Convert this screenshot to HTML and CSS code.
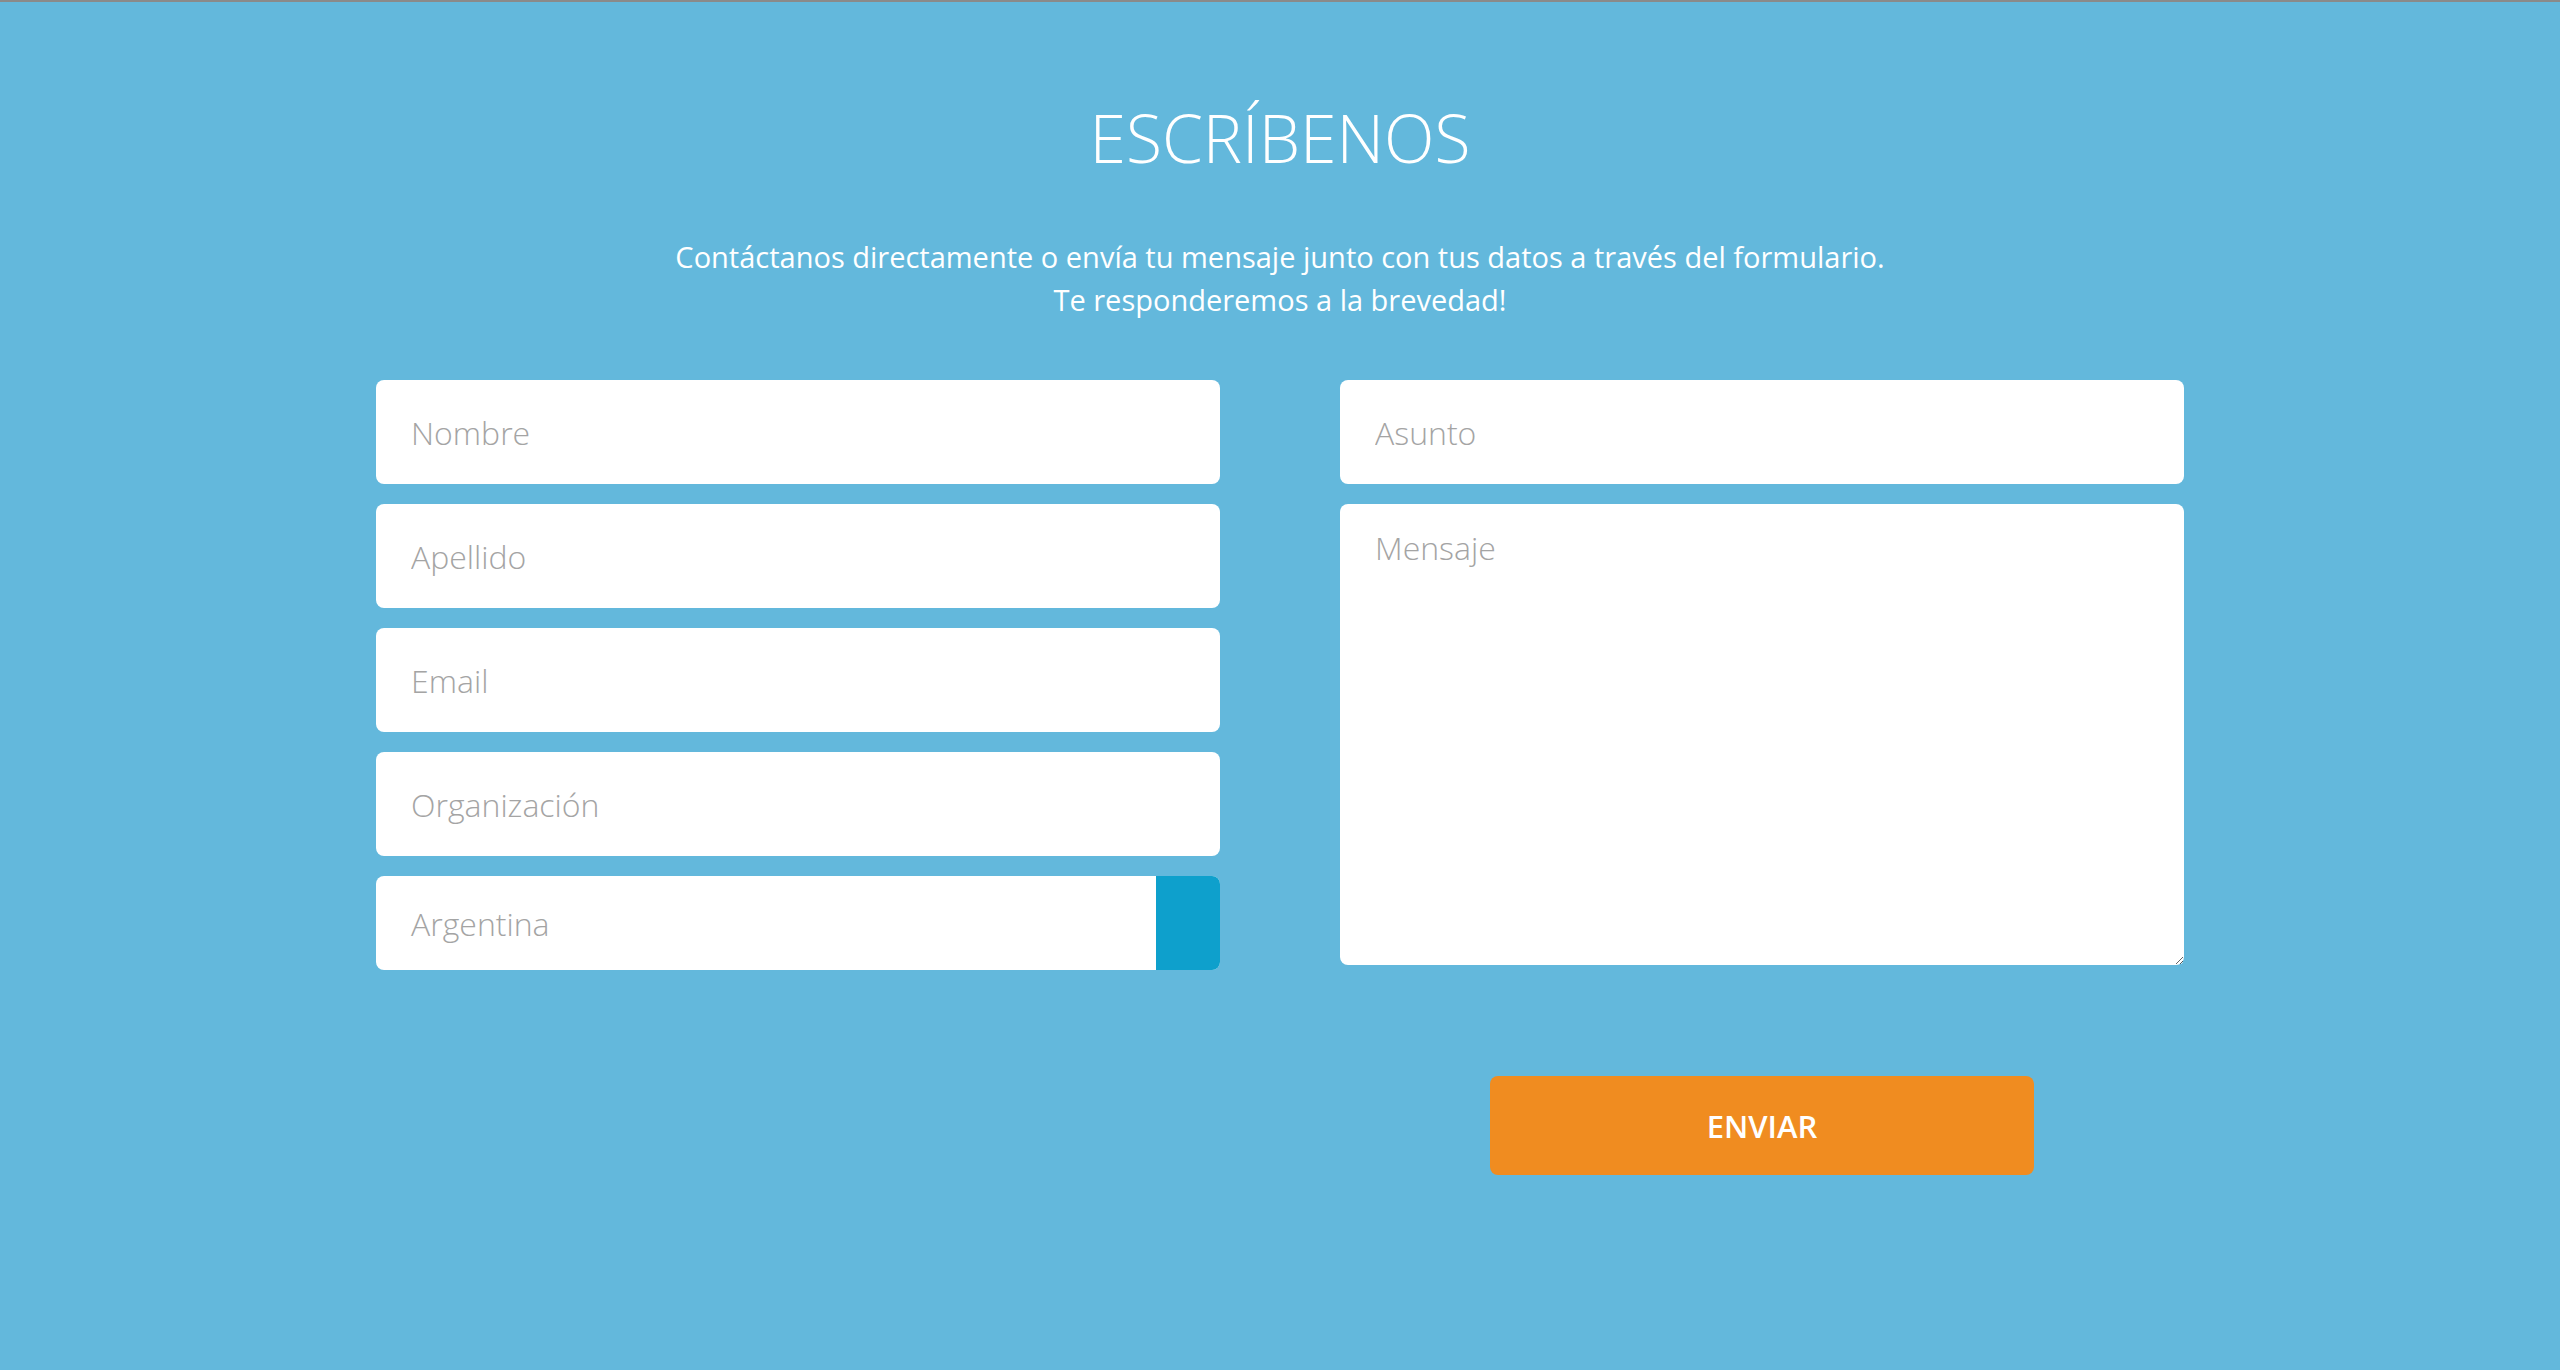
FILE: index.html
```html
<!DOCTYPE html>
<html lang="es">
<head>
<meta charset="utf-8">
<title>Escríbenos</title>
<link rel="stylesheet" href="styles.css">
</head>
<body>
<section class="contact">
  <h1 class="title">ESCRÍBENOS</h1>
  <p class="lead">Contáctanos directamente o envía tu mensaje junto con tus datos a través del formulario.<br>Te responderemos a la brevedad!</p>
  <form class="form">
    <div class="col">
      <input class="field" type="text" placeholder="Nombre">
      <input class="field" type="text" placeholder="Apellido">
      <input class="field" type="text" placeholder="Email">
      <input class="field" type="text" placeholder="Organización">
      <div class="select">
        <span class="select-text">Argentina</span>
        <span class="select-btn"></span>
      </div>
    </div>
    <div class="col">
      <input class="field" type="text" placeholder="Asunto">
      <textarea class="field message" placeholder="Mensaje"></textarea>
    </div>
    <div class="actions">
      <button class="send" type="button">ENVIAR</button>
    </div>
  </form>
</section>
</body>
</html>
```

FILE: styles.css
```css
html, body {
  margin: 0;
  padding: 0;
}
body {
  background: #63b8dc;
  border-top: 2px solid #8a8a8a;
  min-height: 1368px;
  font-family: "Open Sans", "Liberation Sans", sans-serif;
  color: #fff;
}
.contact {
  display: flex;
  flex-direction: column;
  align-items: center;
  padding-top: 90px;
}
.title {
  margin: 0;
  font-size: 66px;
  font-weight: 300;
  line-height: 90px;
  letter-spacing: 0;
}
.lead {
  margin: 53px 0 0;
  font-size: 29px;
  line-height: 43px;
  text-align: center;
  font-weight: 400;
}
.form {
  margin-top: 59px;
  width: 1808px;
  display: grid;
  grid-template-columns: 844px 844px;
  column-gap: 120px;
}
.col {
  display: flex;
  flex-direction: column;
  gap: 20px;
}
.field {
  box-sizing: border-box;
  height: 104px;
  width: 100%;
  border: 0;
  border-radius: 8px;
  background: #fff;
  padding: 0 35px;
  font-family: "Open Sans", "Liberation Sans", sans-serif;
  font-size: 32px;
  font-weight: 300;
  color: #555;
  outline: none;
  margin: 0;
}
.field::placeholder {
  color: #a4a4a4;
  opacity: 1;
}
.message {
  height: 461px;
  padding-top: 22px;
  line-height: 1.362;
  resize: vertical;
}
.select {
  height: 94px;
  display: flex;
  border-radius: 8px;
  overflow: hidden;
  background: #fff;
}
.select-text {
  flex: 1;
  display: flex;
  align-items: center;
  padding-left: 35px;
  font-size: 32px;
  font-weight: 300;
  color: #a4a4a4;
}
.select-btn {
  width: 64px;
  background: #0ea0cc;
}
.actions {
  grid-column: 2;
  display: flex;
  justify-content: center;
  margin-top: 106px;
}
.send {
  width: 544px;
  height: 99px;
  border: 0;
  border-radius: 8px;
  background: #f08c20;
  color: #fff;
  font-family: "Open Sans", "Liberation Sans", sans-serif;
  font-size: 31px;
  font-weight: 600;
  cursor: pointer;
}
```
